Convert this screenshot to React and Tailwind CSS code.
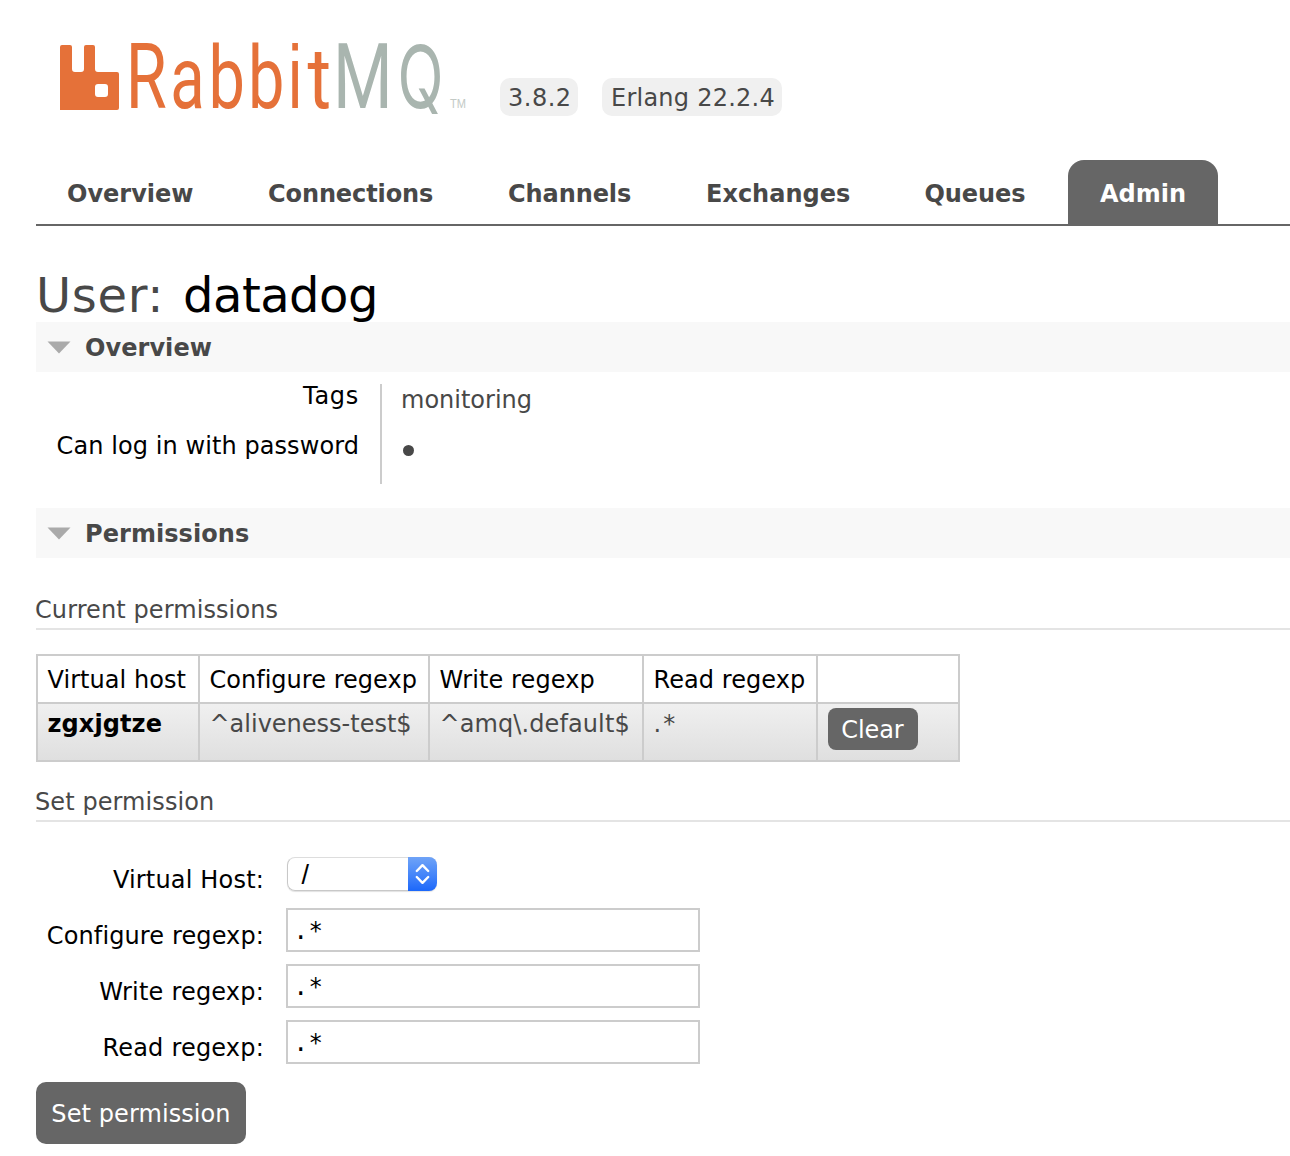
import React from "react";

const orange = "#e57139";
const grey = "#a9b5af";

const wordmark = [
  { letter: "R", x: 125.7, scale: 0.74, size: 90, font: "Roboto", color: orange },
  { letter: "a", x: 170.2, scale: 0.72, size: 88, font: "Roboto", color: orange },
  { letter: "b", x: 208.5, scale: 0.75, size: 86.5, font: "Roboto", color: orange },
  { letter: "b", x: 248, scale: 0.75, size: 86.5, font: "Roboto", color: orange },
  { letter: "i", x: 288, scale: 0.72, size: 89, font: "Liberation Sans", color: orange },
  { letter: "t", x: 307.5, scale: 0.84, size: 86, font: "Roboto", color: orange },
  { letter: "M", x: 333, scale: 0.76, size: 90, font: "Roboto", color: grey },
  { letter: "Q", x: 397.4, scale: 0.7, size: 86, font: "Inter", color: grey },
];

function Logo() {
  return (
    <svg width="420" height="86" viewBox="50 36 420 86" className="block shrink-0 overflow-visible" aria-label="RabbitMQ">
      <path
        fill={orange}
        d="M62 45h8q2 0 2 2v22q0 3 3 3h6q3 0 3-3V47q0-2 2-2h7q2 0 2 2v22q0 3 3 3h19q2 0 2 2v34q0 2-2 2H60V47q0-2 2-2zM98 84q-3 0-3 3v7q0 3 3 3h7q3 0 3-3v-7q0-3-3-3z"
      />
      {wordmark.map((g, i) => (
        <text key={i} transform={`translate(${g.x} 108) scale(${g.scale} 1)`} fontFamily={g.font} fontSize={g.size} fill={g.color}>
          {g.letter}
        </text>
      ))}
      <text x="450" y="107.5" fontFamily="Liberation Sans" fontSize="13" textLength="16" lengthAdjust="spacingAndGlyphs" fill="#c3cac6">
        TM
      </text>
    </svg>
  );
}

function Section({ title, className = "" }) {
  return (
    <h2 className={`flex h-[50px] items-center bg-[#f8f8f8] pl-[11px] font-bold ${className}`}>
      <svg width="24" height="14" viewBox="0 0 24 14" className="mr-3.5 mt-0.5">
        <path d="M0.5 0.5h23L12 12.5z" fill="#aaa" />
      </svg>
      <span className="pt-0.5 tracking-[0.06px]">{title}</span>
    </h2>
  );
}

function Field({ label, track, children }) {
  return (
    <div className="flex h-14 items-start">
      <label className={`mr-[22px] w-[228px] pt-[14px] text-right leading-[28px] text-black ${track}`}>{label}</label>
      {children}
    </div>
  );
}

function RegexpInput() {
  return (
    <div className="h-11 w-[414px] border-2 border-[#ccc] pl-[5.5px] font-['DejaVu_Sans_Mono',monospace] text-[24px] leading-[42px] tracking-[0.6px] text-black">
      .*
    </div>
  );
}

const cell = "border-2 border-[#ccc] pl-[9.5px] pr-0 text-left align-top font-normal";

export default function App() {
  return (
    <div className="h-[1156px] w-[1290px] overflow-hidden bg-white pl-9 pt-9 font-['DejaVu_Sans',Verdana,sans-serif] text-2xl leading-[28px] text-[#484848]">
      <header className="flex h-[124px] items-start pl-3.5">
        <Logo />
        <span className="ml-[30px] mt-[42px] h-[38px] w-[78px] rounded-[10px] bg-[#f0f0f0] pl-2 leading-[40px] tracking-[0.5px]">3.8.2</span>
        <span className="ml-6 mt-[42px] h-[38px] w-[180px] whitespace-nowrap rounded-[10px] bg-[#f0f0f0] pl-[9px] leading-[40px] tracking-[0.24px]">Erlang 22.2.4</span>
      </header>

      <nav className="flex h-[66px] border-b-2 border-[#666] font-bold leading-[68px]">
        <span className="ml-[31px] w-[201px]">Overview</span>
        <span className="w-60 tracking-[-0.1px]">Connections</span>
        <span className="w-[198px] tracking-[-0.08px]">Channels</span>
        <span className="w-[218.5px]">Exchanges</span>
        <span className="w-[143.5px] tracking-[-0.08px]">Queues</span>
        <span className="h-16 w-[150px] rounded-t-[16px] bg-[#666] text-center text-white">Admin</span>
      </nav>

      <h1 className="flex h-24 whitespace-nowrap pt-[39px] text-[48px] leading-[60px]">
        <span className="w-[147px] tracking-[0.7px]">User:</span>
        <span className="tracking-[-0.5px] text-black">datadog</span>
      </h1>

      <Section title="Overview" />
      <div className="mt-3 flex h-[100px]">
        <div className="w-[346px] border-r-2 border-[#ccc] pr-[21px] text-right text-black">
          <div className="h-[50px] leading-[24px] tracking-[0.7px]">Tags</div>
          <div className="whitespace-nowrap leading-[24px] tracking-[0.08px]">Can log in with password</div>
        </div>
        <div className="pl-[19px]">
          <div className="h-[61px] leading-[32px]">monitoring</div>
          <div className="ml-0.5 size-[11px] rounded-full bg-[#484848]" />
        </div>
      </div>

      <Section title="Permissions" className="mt-6" />

      <h3 className="mt-9 h-9 border-b-2 border-[#e4e4e4] leading-[32px] tracking-[0.09px]">
        <span className="-ml-px">Current permissions</span>
      </h3>

      <table className="mt-6 w-[924px] table-fixed border-collapse whitespace-nowrap">
        <colgroup>
          <col className="w-[162px]" />
          <col className="w-[230px]" />
          <col className="w-[214px]" />
          <col className="w-[174px]" />
          <col className="w-[142px]" />
        </colgroup>
        <thead>
          <tr className="h-12 text-black">
            <th className={`${cell} tracking-[0.05px]`}><div className="h-[46px] leading-[48px]">Virtual host</div></th>
            <th className={`${cell} tracking-[0.02px]`}><div className="h-[46px] leading-[48px]">Configure regexp</div></th>
            <th className={`${cell} tracking-[0.1px]`}><div className="h-[46px] leading-[48px]">Write regexp</div></th>
            <th className={`${cell} tracking-[0.06px]`}><div className="h-[46px] leading-[48px]">Read regexp</div></th>
            <th className={cell} />
          </tr>
        </thead>
        <tbody>
          <tr className="h-[58px] bg-linear-to-b from-[#f0f0f0] to-[#dfdfdf] leading-[40px]">
            <td className={`${cell} tracking-[0.1px] text-black`}><b>zgxjgtze</b></td>
            <td className={cell}>^aliveness-test$</td>
            <td className={`${cell} tracking-[0.1px]`}>^amq\.default$</td>
            <td className={`${cell} tracking-[2px]`}>.*</td>
            <td className={cell}>
              <button className="ml-[0.5px] mt-1 block h-[42px] w-[90px] rounded-lg bg-[#666] pr-px text-center leading-[44px] tracking-[-0.1px] text-white">Clear</button>
            </td>
          </tr>
        </tbody>
      </table>

      <h3 className="mt-6 h-9 border-b-2 border-[#e4e4e4] leading-[32px] tracking-[0.09px]">
        <span className="-ml-px">Set permission</span>
      </h3>

      <form className="mt-[30px]">
        <Field label="Virtual Host:" track="tracking-[0.18px]">
          <div className="ml-px mt-[5px] flex h-[34px] w-[150px] rounded-lg border border-r-0 border-[#c8c8c8] border-t-[#ddd] shadow-[0_1px_1px_rgba(0,0,0,0.12)]">
            <span className="w-[120px] pl-[13.5px] font-['Liberation_Sans',sans-serif] text-[27px] leading-[35px] text-black">/</span>
            <span className="-my-px flex h-[34px] w-[29px] items-center justify-center rounded-r-lg bg-linear-to-b from-[#6fa3f7] to-[#1b67fa]">
              <svg width="15" height="22" viewBox="0 0 15 22" fill="none" stroke="white" strokeWidth="2.4" strokeLinecap="round" strokeLinejoin="round">
                <path d="M1.8 8l5.7-5.8L13.2 8M1.8 14l5.7 5.8 5.7-5.8" />
              </svg>
            </span>
          </div>
        </Field>
        <Field label="Configure regexp:" track="tracking-[0.12px]"><RegexpInput /></Field>
        <Field label="Write regexp:" track="tracking-[0.2px]"><RegexpInput /></Field>
        <Field label="Read regexp:" track="tracking-[0.2px]"><RegexpInput /></Field>
        <button type="button" className="mt-1.5 block h-[62px] w-[210px] rounded-[10px] bg-[#666] text-center leading-[64px] tracking-[0.09px] text-white">Set permission</button>
      </form>
    </div>
  );
}
